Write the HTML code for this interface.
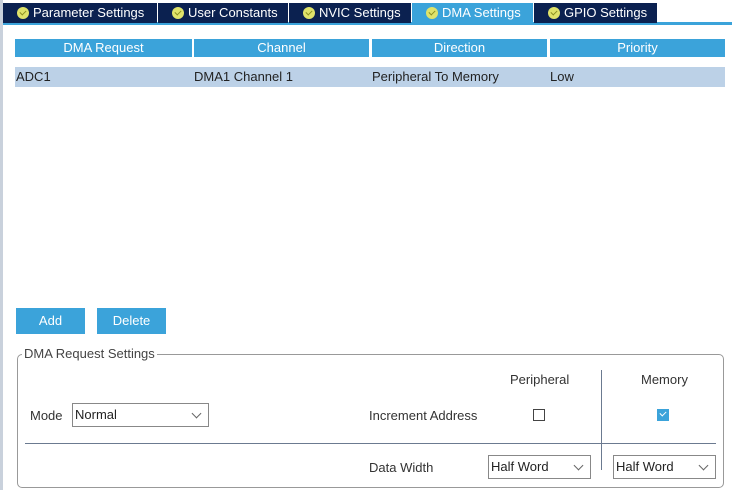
<!DOCTYPE html>
<html><head><style>
*{margin:0;padding:0;box-sizing:border-box}
body{width:732px;height:490px;background:#fff;position:relative;overflow:hidden;font-family:"Liberation Sans",Arial,sans-serif;font-size:13px;color:#333}
.a{position:absolute}
.tab{position:absolute;top:3px;height:20px;background:#0b2150;color:#fff;font-size:13px;line-height:20px;padding-left:30px;white-space:nowrap}
.tab i{position:absolute;left:14px;top:4px;width:12px;height:12px;border-radius:50%;background:#dfe36a}
.tab i:after{content:"";position:absolute;left:3px;top:3px;width:5px;height:3px;border-left:1.5px solid #8a8f20;border-bottom:1.5px solid #8a8f20;transform:rotate(-45deg)}
.th{position:absolute;top:39px;height:18px;background:#3ba3da;color:#fff;text-align:center;line-height:18px;font-size:13px}
.td{position:absolute;top:67px;height:20px;line-height:20px;font-size:13px;color:#222}
.btn{position:absolute;top:308px;height:26px;background:#3ba3da;color:#fff;text-align:center;line-height:26px}
.sel{position:absolute;border:1px solid #888;height:24px;line-height:22px;padding-left:2px;color:#222;background:#fff}
.sel:after{content:"";position:absolute;right:8px;top:6px;width:6px;height:6px;border-right:1px solid #666;border-bottom:1px solid #666;transform:rotate(45deg)}
</style></head><body>
<div class="a" style="left:0;top:0;width:3px;height:490px;background:#c9d1dc"></div>
<div class="a" style="left:3px;top:22px;width:729px;height:3px;background:#3ba3da"></div>
<div class="tab" style="left:3px;width:154px"><i></i>Parameter Settings</div>
<div class="tab" style="left:158px;width:130px"><i></i>User Constants</div>
<div class="tab" style="left:289px;width:122px"><i></i>NVIC Settings</div>
<div class="tab" style="left:412px;width:121px;background:#3ba3da"><i></i>DMA Settings</div>
<div class="tab" style="left:534px;width:123px"><i></i>GPIO Settings</div>
<div class="th" style="left:15px;width:177px">DMA Request</div>
<div class="th" style="left:194px;width:175px">Channel</div>
<div class="th" style="left:372px;width:175px">Direction</div>
<div class="th" style="left:550px;width:175px">Priority</div>
<div class="a" style="left:15px;top:67px;width:710px;height:20px;background:#bcd1e7"></div>
<div class="td" style="left:16px">ADC1</div>
<div class="td" style="left:194px">DMA1 Channel 1</div>
<div class="td" style="left:372px">Peripheral To Memory</div>
<div class="td" style="left:550px">Low</div>
<div class="btn" style="left:16px;width:69px">Add</div>
<div class="btn" style="left:97px;width:69px">Delete</div>
<div class="a" style="left:17px;top:354px;width:707px;height:134px;border:1px solid #999;border-radius:5px"></div>
<div class="a" style="left:22px;top:346px;background:#fff;padding:0 2px;line-height:16px;color:#444">DMA Request Settings</div>
<div class="a" style="left:30px;top:408px">Mode</div>
<div class="sel" style="left:72px;top:403px;width:137px">Normal</div>
<div class="a" style="left:25px;top:443px;width:691px;height:1px;background:#6b7a90"></div>
<div class="a" style="left:601px;top:370px;width:1px;height:100px;background:#6b7a90"></div>
<div class="a" style="left:510px;top:372px">Peripheral</div>
<div class="a" style="left:641px;top:372px">Memory</div>
<div class="a" style="left:369px;top:408px">Increment Address</div>
<div class="a" style="left:533px;top:409px;width:12px;height:12px;border:1px solid #444"></div>
<div class="a" style="left:657px;top:409px;width:12px;height:12px;background:#3ba3da"><div style="position:absolute;left:3px;top:2px;width:6px;height:4px;border-left:1.5px solid #fff;border-bottom:1.5px solid #fff;transform:rotate(-45deg)"></div></div>
<div class="a" style="left:369px;top:460px">Data Width</div>
<div class="sel" style="left:488px;top:455px;width:103px">Half Word</div>
<div class="sel" style="left:613px;top:455px;width:103px">Half Word</div>
</body></html>
